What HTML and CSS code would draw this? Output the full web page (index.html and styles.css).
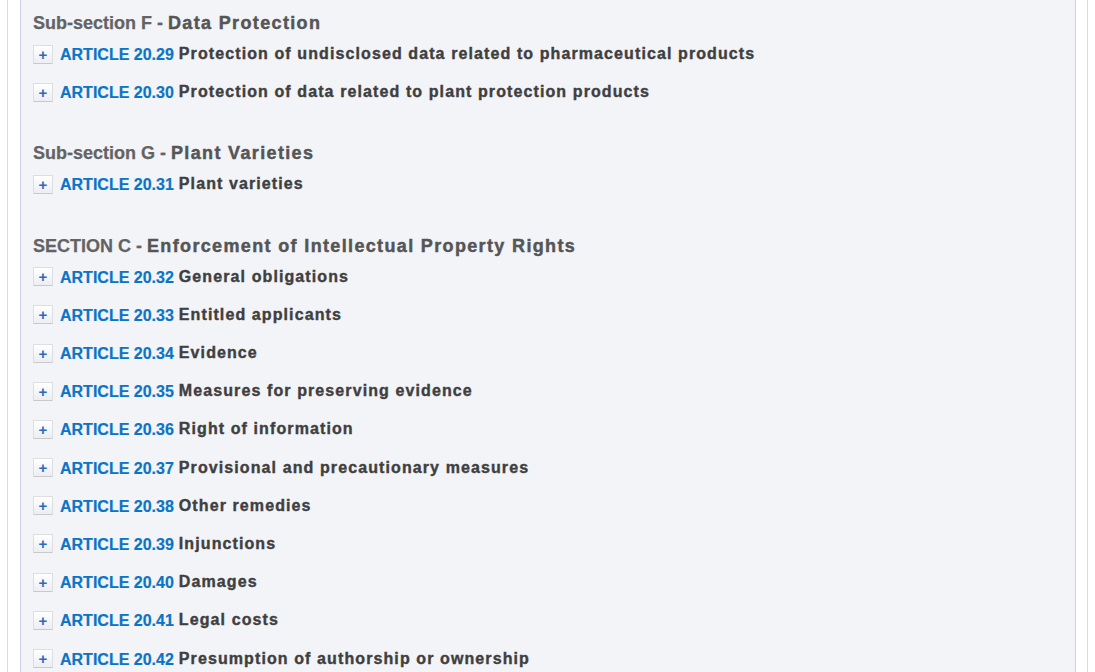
FILE: index.html
```html
<!DOCTYPE html>
<html>
<head>
<meta charset="utf-8">
<link rel="stylesheet" href="styles.css">
</head>
<body>
<div class="page">
  <div class="panel">
    <h3 class="heading"><span class="lead">Sub-section F - </span><span class="name">Data Protection</span></h3>
    <div class="row"><span class="toggle">+</span><span class="num">ARTICLE 20.29</span><span class="title">Protection of undisclosed data related to pharmaceutical products</span></div>
    <div class="row"><span class="toggle">+</span><span class="num">ARTICLE 20.30</span><span class="title">Protection of data related to plant protection products</span></div>

    <h3 class="heading spaced"><span class="lead">Sub-section G - </span><span class="name">Plant Varieties</span></h3>
    <div class="row"><span class="toggle">+</span><span class="num">ARTICLE 20.31</span><span class="title">Plant varieties</span></div>

    <h3 class="heading spaced"><span class="lead">SECTION C - </span><span class="name">Enforcement of Intellectual Property Rights</span></h3>
    <div class="row"><span class="toggle">+</span><span class="num">ARTICLE 20.32</span><span class="title">General obligations</span></div>
    <div class="row"><span class="toggle">+</span><span class="num">ARTICLE 20.33</span><span class="title">Entitled applicants</span></div>
    <div class="row"><span class="toggle">+</span><span class="num">ARTICLE 20.34</span><span class="title">Evidence</span></div>
    <div class="row"><span class="toggle">+</span><span class="num">ARTICLE 20.35</span><span class="title">Measures for preserving evidence</span></div>
    <div class="row"><span class="toggle">+</span><span class="num">ARTICLE 20.36</span><span class="title">Right of information</span></div>
    <div class="row"><span class="toggle">+</span><span class="num">ARTICLE 20.37</span><span class="title">Provisional and precautionary measures</span></div>
    <div class="row"><span class="toggle">+</span><span class="num">ARTICLE 20.38</span><span class="title">Other remedies</span></div>
    <div class="row"><span class="toggle">+</span><span class="num">ARTICLE 20.39</span><span class="title">Injunctions</span></div>
    <div class="row"><span class="toggle">+</span><span class="num">ARTICLE 20.40</span><span class="title">Damages</span></div>
    <div class="row"><span class="toggle">+</span><span class="num">ARTICLE 20.41</span><span class="title">Legal costs</span></div>
    <div class="row"><span class="toggle">+</span><span class="num">ARTICLE 20.42</span><span class="title">Presumption of authorship or ownership</span></div>
  </div>
</div>
</body>
</html>
```

FILE: styles.css
```css
html, body {
  margin: 0;
  padding: 0;
  background: #ffffff;
  overflow: hidden;
}
body {
  font-family: "Liberation Sans", Arial, sans-serif;
  height: 672px;
}
.page {
  margin-left: 7px;
  width: 1081px;
  height: 672px;
  border-left: 1px solid #dcdcdc;
  border-right: 1px solid #dcdcdc;
  padding: 0 11px 0 12px;
  box-sizing: border-box;
}
.panel {
  background: #f3f4f8;
  border-left: 1px solid #ccd4e4;
  border-right: 1px solid #ccd4e4;
  padding: 11px 12px 0 12px;
  height: 100%;
  box-sizing: border-box;
  overflow: hidden;
}
.heading {
  margin: 0;
  font-size: 18px;
  line-height: 24px;
  font-weight: bold;
  color: #636363;
  white-space: nowrap;
  -webkit-text-stroke: 0.25px currentColor;
}
.heading.spaced {
  margin-top: 30px;
}
.heading .name {
  color: #555555;
  letter-spacing: 1.35px;
  -webkit-text-stroke: 0.45px currentColor;
}
.row {
  height: 38.2px;
  display: flex;
  align-items: center;
  white-space: nowrap;
  font-size: 16px;
  font-weight: bold;
}
.toggle {
  width: 18px;
  height: 17px;
  border: 1px solid #dedede;
  border-bottom-color: #c9c9c9;
  border-radius: 1px;
  background: linear-gradient(#ffffff, #eceef2);
  color: #2a6cc0;
  font-size: 15px;
  font-weight: bold;
  line-height: 17px;
  text-align: center;
  margin-right: 7px;
  flex: none;
}
.num {
  color: #0c74c6;
  margin-right: 5px;
  position: relative;
  top: 1px;
  -webkit-text-stroke: 0.2px currentColor;
}
.title {
  color: #3f3f3f;
  letter-spacing: 1.1px;
  -webkit-text-stroke: 0.4px currentColor;
}
```
